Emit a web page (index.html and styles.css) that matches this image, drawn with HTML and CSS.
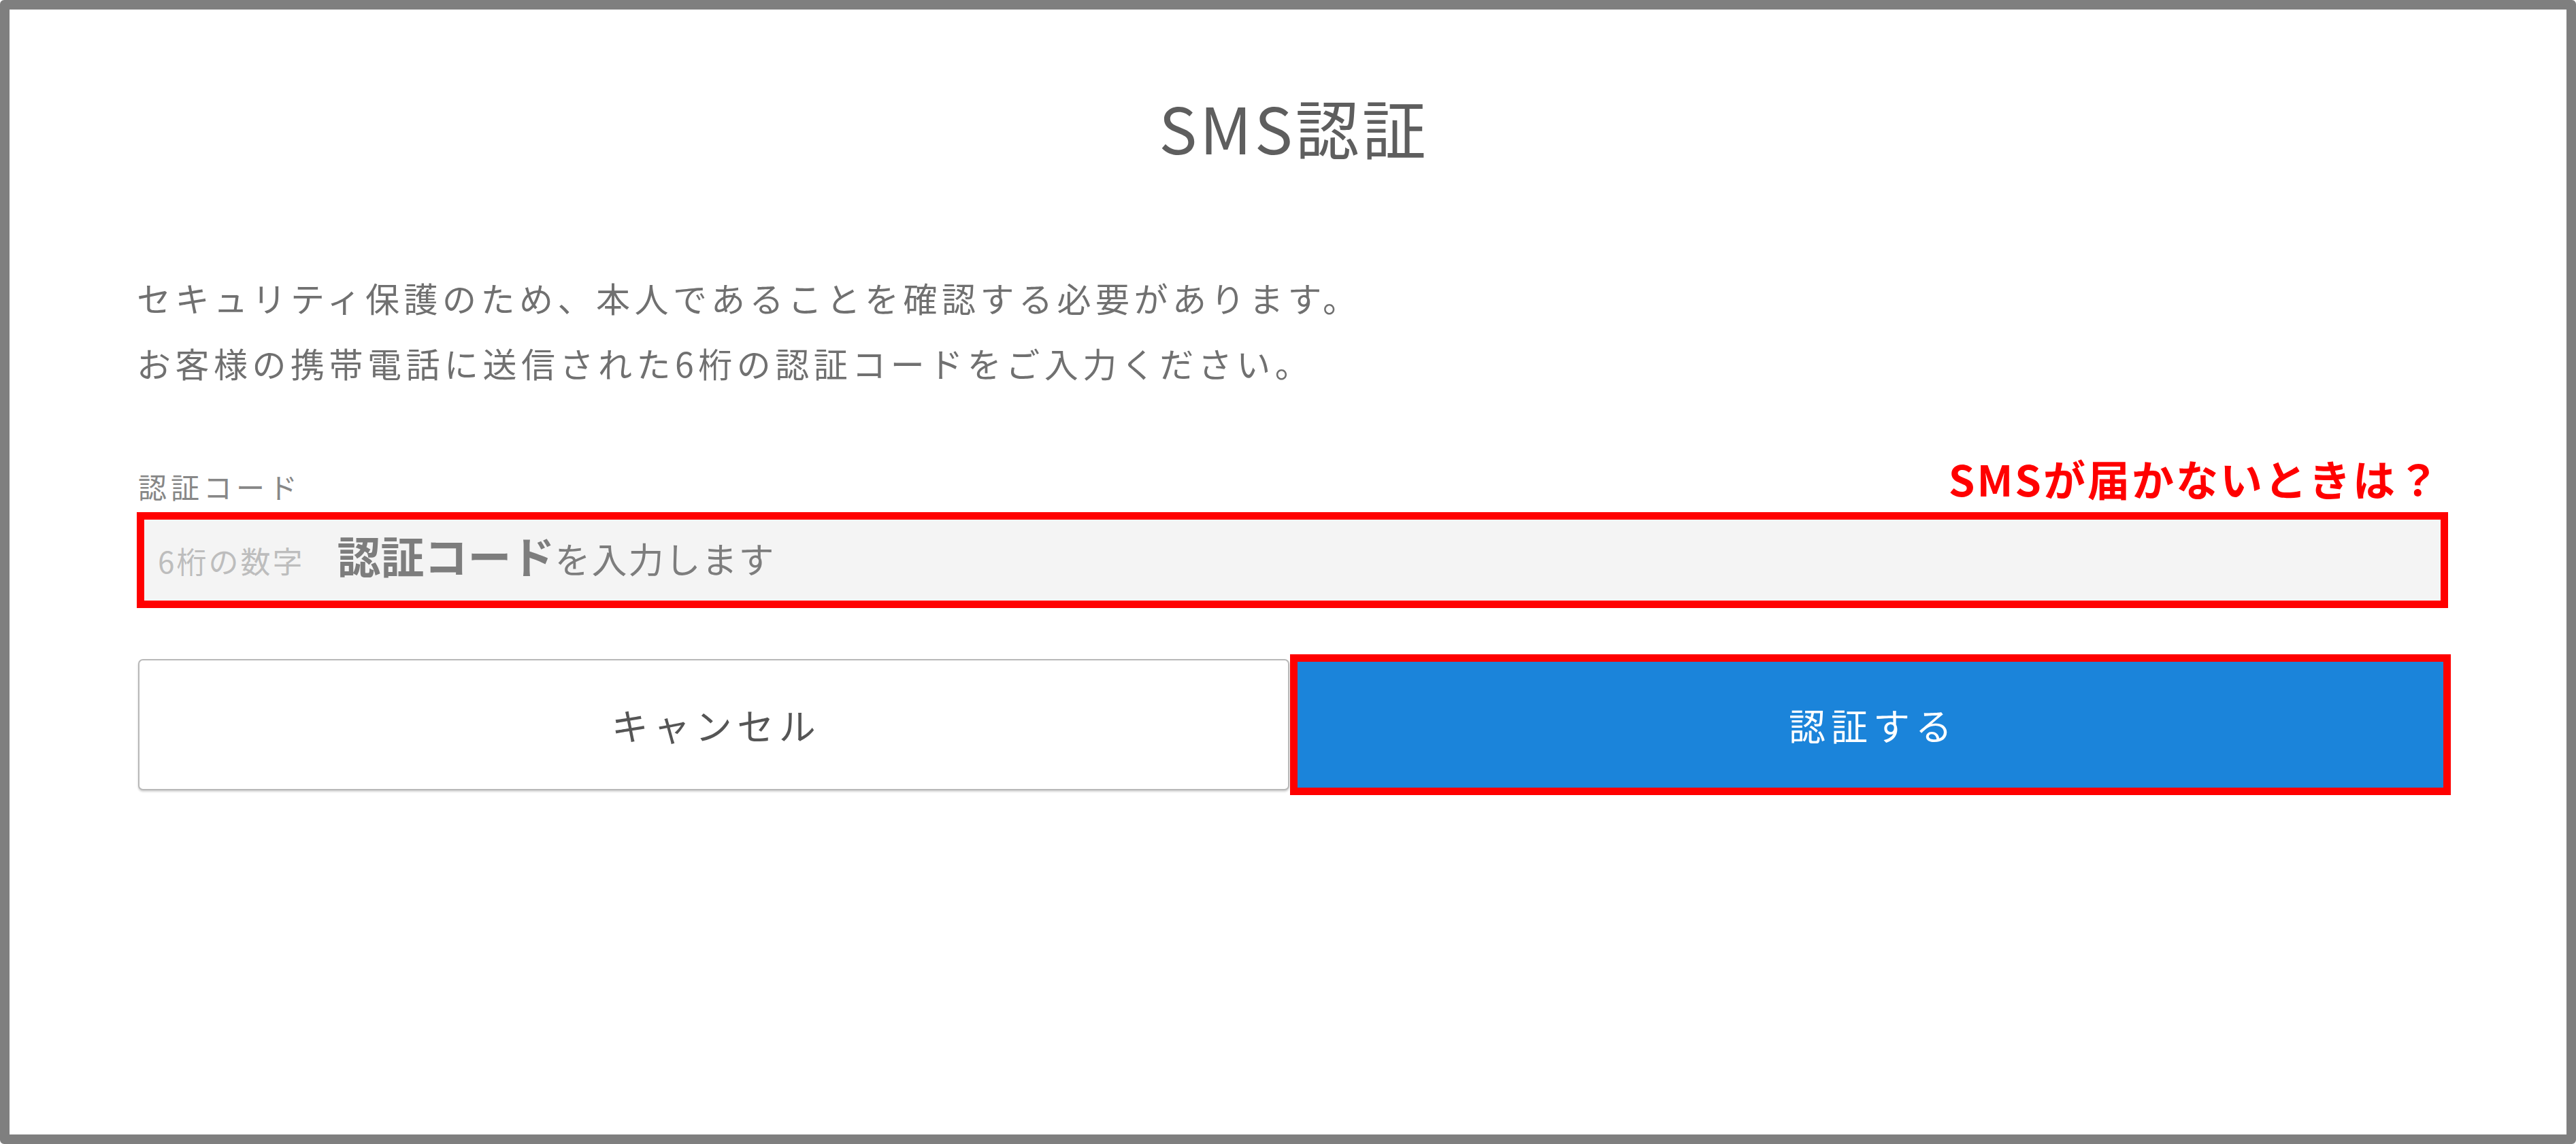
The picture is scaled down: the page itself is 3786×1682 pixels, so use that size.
FILE: index.html
```html
<!DOCTYPE html>
<html lang="ja">
<head>
<meta charset="utf-8">
<title>SMS認証</title>
<link rel="stylesheet" href="styles.css">
</head>
<body>
<div class="frame">
  <div class="dialog">
    <h1 class="title">SMS認証</h1>
    <p class="lead">セキュリティ保護のため、本人であることを確認する必要があります。<br>お客様の携帯電話に送信された6桁の認証コードをご入力ください。</p>
    <div class="label-row">
      <span class="label">認証コード</span>
      <a class="help-link">SMSが届かないときは？</a>
    </div>
    <div class="code-input">
      <span class="placeholder">6桁の数字</span><span class="hint-strong">認証コード</span><span class="hint">を入力します</span>
    </div>
    <div class="buttons">
      <div class="btn btn-cancel">キャンセル</div>
      <div class="btn btn-submit">認証する</div>
    </div>
  </div>
</div>
</body>
</html>
```
FILE: styles.css
```css
html, body {
  margin: 0;
  padding: 0;
  background: #ffffff;
}

body {
  font-family: "Noto Sans CJK JP", "Noto Sans", sans-serif;
}

.frame {
  box-sizing: border-box;
  width: 3786px;
  height: 1682px;
  border: 14px solid #7f7f7f;
  border-radius: 6px;
  background: #ffffff;
}

.dialog {
  padding: 104px 170px 0 187px;
}

.title {
  margin: 0;
  font-size: 94px;
  font-weight: 400;
  line-height: 136px;
  letter-spacing: 4px;
  color: #5e5e5e;
  text-align: center;
}

.lead {
  margin: 135px 0 0;
  font-size: 50px;
  line-height: 96px;
  letter-spacing: 6.5px;
  color: #707070;
}

.label-row {
  display: flex;
  justify-content: space-between;
  align-items: flex-end;
  margin: 82px 4px 0 2px;
}

.label {
  font-size: 42px;
  line-height: 56px;
  letter-spacing: 6px;
  color: #878787;
}

.help-link {
  font-size: 62px;
  font-weight: 700;
  line-height: 80px;
  letter-spacing: 3px;
  color: #ff0000;
  margin-right: 10px;
}

.code-input {
  box-sizing: border-box;
  height: 141px;
  margin: 10px 4px 0 0;
  padding: 19px 20px 0;
  border: 11px solid #ff0000;
  background: #f4f4f4;
  font-size: 52px;
  line-height: 1;
  white-space: nowrap;
}

.placeholder {
  font-size: 44px;
  letter-spacing: 3px;
  color: #bdbdbd;
  margin-right: 48px;
}

.hint-strong {
  font-size: 64px;
  font-weight: 700;
  color: #7d7d7d;
}

.hint {
  font-size: 52px;
  letter-spacing: 2px;
  color: #7d7d7d;
}

.buttons {
  display: flex;
  align-items: center;
  margin-top: 68px;
  height: 207px;
}

.btn {
  box-sizing: border-box;
  display: flex;
  align-items: center;
  justify-content: center;
  font-size: 54px;
}

.btn-cancel {
  flex: 0 0 1692px;
  height: 193px;
  margin-left: 2px;
  border: 2px solid #b8b8b8;
  border-radius: 7px;
  box-shadow: 0 2px 3px rgba(0, 0, 0, 0.18);
  background: #ffffff;
  color: #555555;
  letter-spacing: 7.5px;
  padding-left: 7px;
}

.btn-submit {
  flex: 1 1 auto;
  height: 207px;
  margin-left: 1px;
  border: 11px solid #ff0000;
  background: #1b84da;
  color: #ffffff;
  letter-spacing: 8px;
  padding-left: 8px;
}
```
